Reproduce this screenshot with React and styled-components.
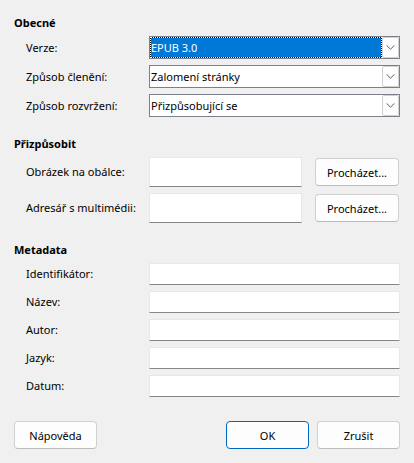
import React, { useRef, useState } from "react";
import styled, { createGlobalStyle, ThemeProvider } from "styled-components";

const theme = {
  face: "#f0f0f0",
  field: "#ffffff",
  control: "#fdfdfd",
  text: "#000000",
  accent: "#0078d7",
  accentBorder: "#0067c0",
  comboBorder: "#7a7f89",
  fieldEdge: "#e8e8e8",
  fieldLine: "#868686",
  buttonBorder: "#d0d0d0",
  buttonShade: "#bcbcbc",
};

const GlobalStyle = createGlobalStyle`
  * {
    box-sizing: border-box;
  }

  body {
    margin: 0;
    background: ${theme.face};
  }

  body, button, input, select {
    font-family: "Noto Sans", "Open Sans", sans-serif;
    font-size: 11px;
    line-height: 16px;
    color: ${theme.text};
  }
`;

const Dialog = styled.form`
  display: flex;
  flex-direction: column;
  gap: 19px;
  padding: 15px 14px 14px;
`;

const Section = styled.section`
  display: flex;
  flex-direction: column;
  gap: 5px;
`;

const SectionTitle = styled.h2`
  margin: 0;
  font-size: 11px;
  line-height: 16px;
  font-weight: 700;
`;

const Rows = styled.div`
  display: flex;
  flex-direction: column;
  gap: 6px;
  padding-left: 12px;
`;

const Row = styled.div`
  display: grid;
  grid-template-columns: ${(props) =>
    props.$browse ? "123px 1fr 84px" : "123px 1fr"};
  align-items: center;
  padding-right: ${(props) => (props.$browse ? "1px" : "0")};
`;

const Label = styled.label`
  white-space: nowrap;
`;

const Combo = styled.div`
  display: flex;
  height: 23px;
  border: 1px solid ${(props) => props.theme.comboBorder};
  background: ${(props) => props.theme.field};
`;

const ComboSelect = styled.select`
  flex: 1;
  min-width: 0;
  appearance: none;
  outline: none;
  border: 1px solid transparent;
  border-radius: 0;
  padding: 0;
  background: transparent;

  ${(props) =>
    props.$active &&
    `
    color: #fff;
    border: 1px dotted #fff;
    background:
      linear-gradient(${props.theme.accent}, ${props.theme.accent}) padding-box,
      linear-gradient(#000, #000) border-box;
  `}

  option {
    color: ${(props) => props.theme.text};
    background: ${(props) => props.theme.field};
  }
`;

const ComboArrow = styled.span`
  display: flex;
  align-items: center;
  justify-content: center;
  width: 17px;
  border: 1px solid ${(props) => props.theme.buttonBorder};
  border-radius: 2px;
  background: ${(props) => props.theme.control};
`;

const Field = styled.input`
  display: block;
  width: 100%;
  min-width: 0;
  height: ${(props) => (props.$tall ? "30px" : "22px")};
  padding: 0 4px;
  outline: none;
  border: 1px solid ${(props) => props.theme.fieldEdge};
  border-bottom-color: ${(props) => props.theme.fieldLine};
  border-radius: 1px;
  background: ${(props) => props.theme.field};
`;

const Button = styled.button`
  width: ${(props) => (props.$fill ? "100%" : "83px")};
  height: 28px;
  padding: 1px 0 0;
  white-space: nowrap;
  border: 1px solid ${(props) => props.theme.buttonBorder};
  border-bottom-color: ${(props) => props.theme.buttonShade};
  border-radius: 4px;
  background: ${(props) => props.theme.control};

  ${(props) => props.$primary && `border-color: ${props.theme.accentBorder};`}
`;

const BrowseField = styled.div`
  padding-right: 13px;
`;

const Footer = styled.footer`
  display: flex;
  justify-content: space-between;
  padding-top: 5px;
`;

const FooterGroup = styled.div`
  display: flex;
  gap: 8px;
`;

const selects = [
  { id: "version", label: "Verze:", options: ["EPUB 3.0", "EPUB 2.0"] },
  {
    id: "split",
    label: "Způsob členění:",
    options: ["Zalomení stránky", "Nadpis"],
  },
  {
    id: "layout",
    label: "Způsob rozvržení:",
    options: ["Přizpůsobující se", "Pevné"],
  },
];

const paths = [
  { id: "cover", label: "Obrázek na obálce:" },
  { id: "media", label: "Adresář s multimédii:" },
];

const metadata = [
  { id: "identifier", label: "Identifikátor:" },
  { id: "title", label: "Název:" },
  { id: "author", label: "Autor:" },
  { id: "language", label: "Jazyk:" },
  { id: "date", label: "Datum:" },
];

const ComboBox = ({ id, options, active, onFocus }) => {
  const ref = useRef(null);

  return (
    <Combo>
      <ComboSelect id={id} ref={ref} $active={active} onFocus={onFocus}>
        {options.map((option) => (
          <option key={option}>{option}</option>
        ))}
      </ComboSelect>
      <ComboArrow aria-hidden="true" onClick={() => ref.current.showPicker()}>
        <svg width="9" height="5" viewBox="0 0 9 5" fill="none">
          <path
            d="M0.8 0.6L4.5 4.2L8.2 0.6"
            stroke="#5c5c5c"
            strokeLinecap="round"
            strokeLinejoin="round"
          />
        </svg>
      </ComboArrow>
    </Combo>
  );
};

const App = () => {
  const [active, setActive] = useState("version");

  return (
    <ThemeProvider theme={theme}>
      <GlobalStyle />
      <Dialog onSubmit={(e) => e.preventDefault()}>
        <Section>
          <SectionTitle>Obecné</SectionTitle>
          <Rows>
            {selects.map(({ id, label, options }) => (
              <Row key={id}>
                <Label htmlFor={id}>{label}</Label>
                <ComboBox
                  id={id}
                  options={options}
                  active={active === id}
                  onFocus={() => setActive(id)}
                />
              </Row>
            ))}
          </Rows>
        </Section>

        <Section>
          <SectionTitle>Přizpůsobit</SectionTitle>
          <Rows>
            {paths.map(({ id, label }) => (
              <Row key={id} $browse>
                <Label htmlFor={id}>{label}</Label>
                <BrowseField>
                  <Field id={id} type="text" $tall />
                </BrowseField>
                <Button type="button" $fill>
                  Procházet...
                </Button>
              </Row>
            ))}
          </Rows>
        </Section>

        <Section>
          <SectionTitle>Metadata</SectionTitle>
          <Rows>
            {metadata.map(({ id, label }) => (
              <Row key={id}>
                <Label htmlFor={id}>{label}</Label>
                <Field id={id} type="text" />
              </Row>
            ))}
          </Rows>
        </Section>

        <Footer>
          <Button type="button">Nápověda</Button>
          <FooterGroup>
            <Button type="submit" $primary>
              OK
            </Button>
            <Button type="button">Zrušit</Button>
          </FooterGroup>
        </Footer>
      </Dialog>
    </ThemeProvider>
  );
};

export default App;
